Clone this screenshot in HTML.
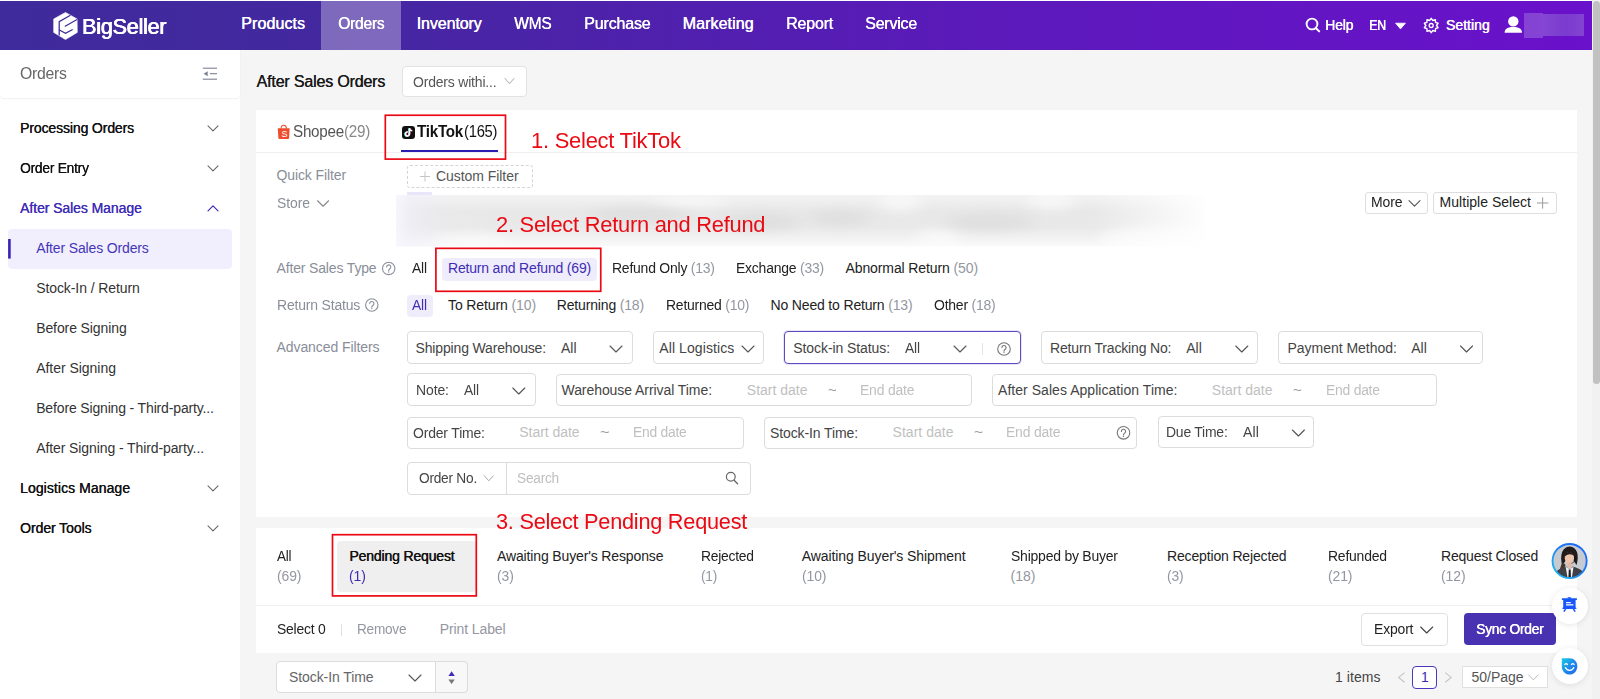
<!DOCTYPE html>
<html lang="en"><head><meta charset="utf-8"><title>After Sales Orders - BigSeller</title>
<style>
html,body{margin:0;padding:0;}
body{width:1600px;height:699px;overflow:hidden;background:#f5f5f5;font-family:"Liberation Sans",sans-serif;}
#app{position:relative;width:1600px;height:699px;overflow:hidden;background:#f5f5f5;}
.b{position:absolute;box-sizing:border-box;}
.t{position:absolute;white-space:nowrap;transform-origin:0 50%;font-family:"Liberation Sans",sans-serif;}
.ov{position:absolute;left:0;top:0;pointer-events:none;}
.g{color:#9497a1;}
.p{color:#3f2db5;}

</style></head>
<body>
<div id="app">

<div class="b" style="left:0px;top:0px;width:1600px;height:1px;background:#fff;"></div>
<div class="b" style="left:0px;top:1px;width:1592px;height:49px;background:linear-gradient(90deg,#3f2b9c 0%,#43289f 20%,#5a1ab9 60%,#6a11cb 100%);"></div>
<div class="b" style="left:321px;top:1px;width:80px;height:49px;background:rgba(255,255,255,0.31);"></div>
<div class="b" style="left:1524px;top:13px;width:19px;height:25px;background:#8543d3;filter:blur(0.6px);"></div>
<div class="b" style="left:1540px;top:14px;width:44px;height:22px;background:linear-gradient(90deg,#8547d3,#7a3bcf 60%,#8344d2);filter:blur(0.6px);"></div>
<div class="b" style="left:1592px;top:0px;width:8px;height:699px;background:#f1f1f1;"></div>
<div class="b" style="left:1593px;top:1px;width:7px;height:383px;background:#c1c1c1;border-radius:3.5px;"></div>
<div class="b" style="left:0px;top:50px;width:240px;height:649px;background:#fff;"></div>
<div class="b" style="left:0px;top:50px;width:240px;height:48px;background:#fff;border-radius:0 0 4px 4px;box-shadow:0 1px 2px rgba(0,0,0,0.07);"></div>
<div class="b" style="left:8px;top:229px;width:224px;height:40px;background:#f1effd;border-radius:4px;"></div>
<div class="b" style="left:402px;top:66px;width:125px;height:31px;background:#fff;border:1px solid #e2e2e2;border-radius:4px;"></div>
<div class="b" style="left:256px;top:110px;width:1321px;height:407px;background:#fff;"></div>
<div class="b" style="left:256px;top:152px;width:1321px;height:1px;background:#efefef;"></div>
<div class="b" style="left:402px;top:125.5px;width:13px;height:13.0px;background:#111;border-radius:3px;"></div>
<div class="b" style="left:401px;top:150px;width:97px;height:2px;background:#2a1db0;"></div>
<div class="b" style="left:407px;top:165px;width:126px;height:23px;border:1px dashed #d4d4d4;border-radius:3px;"></div>
<div class="b" style="left:407px;top:192px;width:25px;height:5px;background:#e9e6fb;"></div>
<div class="b" style="left:1365px;top:192px;width:63px;height:22px;border:1px solid #dedede;border-radius:3px;background:#fff;"></div>
<div class="b" style="left:1433px;top:192px;width:124px;height:22px;border:1px solid #dedede;border-radius:3px;background:#fff;"></div>
<div class="b" style="left:442px;top:257.5px;width:154.5px;height:23.0px;background:#efecfc;border-radius:4px;"></div>
<div class="b" style="left:407px;top:294.5px;width:25.5px;height:22.5px;background:#efecfc;border-radius:4px;"></div>
<div class="b" style="left:407px;top:331px;width:226px;height:33px;border:1px solid #dcdcdc;border-radius:4px;background:#fff;"></div>
<div class="b" style="left:653px;top:331px;width:111px;height:33px;border:1px solid #dcdcdc;border-radius:4px;background:#fff;"></div>
<div class="b" style="left:784px;top:331px;width:237px;height:33px;border:1px solid #5b4cc4;border-radius:4px;background:#fff;box-shadow:0 0 0 1px rgba(91,76,196,0.15);"></div>
<div class="b" style="left:982px;top:343px;width:1px;height:12px;background:#e3e3e3;"></div>
<div class="b" style="left:1041px;top:331px;width:217px;height:33px;border:1px solid #dcdcdc;border-radius:4px;background:#fff;"></div>
<div class="b" style="left:1278px;top:331px;width:205px;height:33px;border:1px solid #dcdcdc;border-radius:4px;background:#fff;"></div>
<div class="b" style="left:407px;top:373px;width:129px;height:33px;border:1px solid #dcdcdc;border-radius:4px;background:#fff;"></div>
<div class="b" style="left:556px;top:374px;width:416px;height:32px;border:1px solid #dcdcdc;border-radius:4px;background:#fff;"></div>
<div class="b" style="left:992px;top:374px;width:445px;height:32px;border:1px solid #dcdcdc;border-radius:4px;background:#fff;"></div>
<div class="b" style="left:407px;top:417px;width:337px;height:32px;border:1px solid #dcdcdc;border-radius:4px;background:#fff;"></div>
<div class="b" style="left:764px;top:417px;width:373px;height:32px;border:1px solid #dcdcdc;border-radius:4px;background:#fff;"></div>
<div class="b" style="left:1158px;top:416px;width:156px;height:32px;border:1px solid #dcdcdc;border-radius:4px;background:#fff;"></div>
<div class="b" style="left:407px;top:462px;width:344px;height:33px;border:1px solid #dcdcdc;border-radius:4px;background:#fff;"></div>
<div class="b" style="left:506px;top:462px;width:1px;height:33px;background:#dcdcdc;"></div>
<div class="b" style="left:256px;top:528px;width:1321px;height:125px;background:#fff;"></div>
<div class="b" style="left:256px;top:605px;width:1321px;height:1px;background:#efefef;"></div>
<div class="b" style="left:337px;top:541px;width:139px;height:51px;background:#efefef;border-radius:4px;"></div>
<div class="b" style="left:341px;top:624px;width:1px;height:12px;background:#e0e0e0;"></div>
<div class="b" style="left:1361px;top:613px;width:86.5px;height:32.5px;border:1px solid #e0e0e0;border-radius:4px;background:#fff;"></div>
<div class="b" style="left:1463.5px;top:613.3px;width:92.5px;height:32.200000000000045px;background:#4932b1;border-radius:4px;"></div>
<div class="b" style="left:276px;top:661px;width:192px;height:32px;border:1px solid #dcdcdc;border-radius:4px;background:#fff;"></div>
<div class="b" style="left:435px;top:661px;width:33px;height:32px;border:1px solid #dcdcdc;border-radius:0 4px 4px 0;background:#f8f8f8;"></div>
<div class="b" style="left:1412px;top:665.7px;width:25px;height:23.59999999999991px;border:1px solid #4a38bd;border-radius:4px;background:#fff;"></div>
<div class="b" style="left:1462px;top:665.7px;width:86px;height:22.799999999999955px;border:1px solid #e0e0e0;background:#fff;"></div>
<div class="b" style="left:1551.5px;top:587.8px;width:36.0px;height:36.0px;background:#fff;border-radius:50%;box-shadow:0 1px 6px rgba(0,0,0,0.10);"></div>
<div class="b" style="left:1551.5px;top:647.8px;width:36.0px;height:36.0px;background:#fff;border-radius:50%;box-shadow:0 1px 6px rgba(0,0,0,0.10);"></div>

<svg class="ov" width="1600" height="699" viewBox="0 0 1600 699">
<path d="M65.5 12.4 L77.1 19.0 L77.3 32.4 L65.5 39.6 L53.7 32.4 L53.7 19.0 Z" fill="#fff" stroke="#fff" stroke-width="0.6" stroke-linejoin="round"/><g fill="none" stroke="#3d2a9a" stroke-width="1.25" stroke-linejoin="miter"><path d="M70.4 15.3 L59.2 21.7 L59.2 35.6"/><path d="M65.2 26.2 L76.6 19.7" stroke-linecap="round"/><path d="M59.4 30.0 L65.5 33.4 L72.2 29.7" stroke-linecap="round"/></g>
<circle cx="1312" cy="24" r="5.4" fill="none" stroke="#fff" stroke-width="1.9"/><path d="M1316 28.2 L1319.2 31.4" stroke="#fff" stroke-width="2" stroke-linecap="round"/>
<path d="M1395.6 23.2 L1405.4 23.2 L1400.5 28.9 Z" fill="#fff" stroke="#fff" stroke-width="0.8" stroke-linejoin="round"/>
<g transform="translate(1431.2,25.5)" fill="none" stroke="#fff"><circle r="2.0" stroke-width="1.3"/><path stroke-width="1.4" stroke-linejoin="round" d="M0.00 -7.20 L1.64 -5.04 L4.23 -5.82 L4.29 -3.12 L6.85 -2.22 L5.30 0.00 L6.85 2.22 L4.29 3.12 L4.23 5.82 L1.64 5.04 L0.00 7.20 L-1.64 5.04 L-4.23 5.82 L-4.29 3.12 L-6.85 2.22 L-5.30 0.00 L-6.85 -2.22 L-4.29 -3.12 L-4.23 -5.82 L-1.64 -5.04 Z"/></g>
<circle cx="1513.3" cy="21.4" r="5.2" fill="#fff"/><path d="M1504.6 32.8 C1504.6 28.6 1508.4 27.0 1513.3 27.0 C1518.2 27.0 1522 28.6 1522 32.8 Z" fill="#fff"/>
<g stroke="#7d8192" stroke-width="1.1" fill="none" stroke-linecap="butt"><path d="M202.8 68.2 H217"/><path d="M210 73.7 H217"/><path d="M202.8 79.2 H217"/></g><path d="M203.6 73.7 L207.7 71.2 L207.7 76.2 Z" fill="#7d8192"/>
<path d="M208.00 125.90 L213.00 130.90 L218.00 125.90" fill="none" stroke="#666" stroke-width="1.1" stroke-linecap="round" stroke-linejoin="round"/>
<path d="M208.00 165.90 L213.00 170.90 L218.00 165.90" fill="none" stroke="#666" stroke-width="1.1" stroke-linecap="round" stroke-linejoin="round"/>
<path d="M208.00 210.90 L213.00 205.90 L218.00 210.90" fill="none" stroke="#3f2db5" stroke-width="1.2" stroke-linecap="round" stroke-linejoin="round"/>
<rect x="8.1" y="239" width="2.6" height="19.6" fill="#3a22b5"/>
<path d="M208.00 485.90 L213.00 490.90 L218.00 485.90" fill="none" stroke="#666" stroke-width="1.1" stroke-linecap="round" stroke-linejoin="round"/>
<path d="M208.00 525.90 L213.00 530.90 L218.00 525.90" fill="none" stroke="#666" stroke-width="1.1" stroke-linecap="round" stroke-linejoin="round"/>
<path d="M505.00 78.50 L509.50 83.50 L514.00 78.50" fill="none" stroke="#bbb" stroke-width="1.1" stroke-linecap="round" stroke-linejoin="round"/>
<g transform="translate(277.5,124.8)"><path d="M3.6 3.6 C3.6 1.4 4.8 0.4 6.25 0.4 C7.7 0.4 8.9 1.4 8.9 3.6" fill="none" stroke="#ee4d2d" stroke-width="1.1"/><path d="M0.3 3.4 H12.2 L11.6 13.2 C11.55 13.8 11.2 14.1 10.6 14.1 H1.9 C1.3 14.1 0.95 13.8 0.9 13.2 Z" fill="#ee4d2d"/></g>
<g transform="translate(402,125.5)"><path d="M7.4 2.6 V8.4 a2 2 0 1 1 -1.6 -1.95" fill="none" stroke="#25f4ee" stroke-width="1.5" transform="translate(-0.5,0.3)"/><path d="M7.4 2.6 V8.4 a2 2 0 1 1 -1.6 -1.95" fill="none" stroke="#fe2c55" stroke-width="1.5" transform="translate(0.5,-0.2)"/><path d="M7.4 2.6 V8.4 a2 2 0 1 1 -1.6 -1.95 M7.4 2.8 C7.7 4.3 8.7 5.1 10.3 5.2" fill="none" stroke="#fff" stroke-width="1.5"/></g>
<rect x="385.3" y="115.25" width="120.2" height="43.85" fill="none" stroke="#ea0a14" stroke-width="1.7"/>
<path d="M420 176.5 H430 M425 171.5 V181.5" stroke="#c4c4c4" stroke-width="1"/>
<path d="M317.60 200.75 L323.10 206.25 L328.60 200.75" fill="none" stroke="#888" stroke-width="1.1" stroke-linecap="round" stroke-linejoin="round"/>
<defs><linearGradient id="blv" x1="0" x2="0" y1="0" y2="1"><stop offset="0" stop-color="#f3f3f3"/><stop offset="0.3" stop-color="#e8e8e8"/><stop offset="0.62" stop-color="#e9e9e9"/><stop offset="0.85" stop-color="#f3f3f3"/><stop offset="1" stop-color="#fbfbfb"/></linearGradient><linearGradient id="blh" x1="0" x2="1" y1="0" y2="0"><stop offset="0" stop-color="#f8f7ff" stop-opacity="0.9"/><stop offset="0.02" stop-color="#f2f0fc" stop-opacity="0.55"/><stop offset="0.06" stop-color="#f0eefa" stop-opacity="0.12"/><stop offset="0.12" stop-color="#fff" stop-opacity="0"/><stop offset="0.86" stop-color="#fff" stop-opacity="0"/><stop offset="0.95" stop-color="#fff" stop-opacity="0.6"/><stop offset="1" stop-color="#fff" stop-opacity="0.95"/></linearGradient><clipPath id="blc"><rect x="396" y="195" width="810" height="51.5"/></clipPath><filter id="blf" x="-20%" y="-50%" width="140%" height="200%"><feGaussianBlur stdDeviation="9 5"/></filter></defs><g clip-path="url(#blc)"><rect x="396" y="195" width="810" height="52" fill="url(#blv)"/><g filter="url(#blf)" fill="#fff" opacity="0.5"><ellipse cx="470" cy="240" rx="40" ry="6"/><ellipse cx="690" cy="202" rx="40" ry="6"/><ellipse cx="900" cy="203" rx="22" ry="10"/><ellipse cx="938" cy="238" rx="22" ry="10"/><ellipse cx="1051" cy="202" rx="24" ry="9"/><ellipse cx="1160" cy="238" rx="60" ry="12"/></g><g filter="url(#blf)" fill="#dcdcdc" opacity="0.7"><ellipse cx="640" cy="215" rx="50" ry="8"/><ellipse cx="760" cy="222" rx="40" ry="9"/><ellipse cx="990" cy="222" rx="45" ry="9"/><ellipse cx="840" cy="218" rx="30" ry="8"/></g><rect x="396" y="195" width="810" height="52" fill="url(#blh)"/></g>
<path d="M1409.00 200.55 L1414.50 206.05 L1420.00 200.55" fill="none" stroke="#555" stroke-width="1.1" stroke-linecap="round" stroke-linejoin="round"/>
<path d="M1537 203 H1548.3 M1542.65 197.4 V208.6" stroke="#999" stroke-width="1"/>
<circle cx="388.7" cy="268.4" r="6.2" fill="none" stroke="#8a8e99" stroke-width="1.1"/>
<path d="M386.60 267.00 a2.1 2.1 0 1 1 3.3 1.7 c-0.8 0.6 -1.2 0.9 -1.2 1.9" fill="none" stroke="#8a8e99" stroke-width="1.1" stroke-linecap="round"/>
<circle cx="388.7" cy="272.00" r="0.7" fill="#8a8e99"/>
<rect x="435.9" y="248.35" width="164.85" height="42.95" fill="none" stroke="#ea0a14" stroke-width="1.7"/>
<circle cx="371.8" cy="305.0" r="6.2" fill="none" stroke="#8a8e99" stroke-width="1.1"/>
<path d="M369.70 303.60 a2.1 2.1 0 1 1 3.3 1.7 c-0.8 0.6 -1.2 0.9 -1.2 1.9" fill="none" stroke="#8a8e99" stroke-width="1.1" stroke-linecap="round"/>
<circle cx="371.8" cy="308.60" r="0.7" fill="#8a8e99"/>
<path d="M610.00 346.00 L616.00 352.00 L622.00 346.00" fill="none" stroke="#555" stroke-width="1.1" stroke-linecap="round" stroke-linejoin="round"/>
<path d="M742.00 346.00 L748.00 352.00 L754.00 346.00" fill="none" stroke="#555" stroke-width="1.1" stroke-linecap="round" stroke-linejoin="round"/>
<path d="M954.00 346.00 L960.00 352.00 L966.00 346.00" fill="none" stroke="#555" stroke-width="1.1" stroke-linecap="round" stroke-linejoin="round"/>
<circle cx="1004" cy="349" r="6.3" fill="none" stroke="#777" stroke-width="1.1"/>
<path d="M1001.90 347.60 a2.1 2.1 0 1 1 3.3 1.7 c-0.8 0.6 -1.2 0.9 -1.2 1.9" fill="none" stroke="#777" stroke-width="1.1" stroke-linecap="round"/>
<circle cx="1004" cy="352.60" r="0.7" fill="#777"/>
<path d="M1235.80 346.00 L1241.80 352.00 L1247.80 346.00" fill="none" stroke="#555" stroke-width="1.1" stroke-linecap="round" stroke-linejoin="round"/>
<path d="M1460.50 346.00 L1466.50 352.00 L1472.50 346.00" fill="none" stroke="#555" stroke-width="1.1" stroke-linecap="round" stroke-linejoin="round"/>
<path d="M512.80 388.00 L518.80 394.00 L524.80 388.00" fill="none" stroke="#555" stroke-width="1.1" stroke-linecap="round" stroke-linejoin="round"/>
<circle cx="1123.5" cy="432.8" r="6.3" fill="none" stroke="#777" stroke-width="1.1"/>
<path d="M1121.40 431.40 a2.1 2.1 0 1 1 3.3 1.7 c-0.8 0.6 -1.2 0.9 -1.2 1.9" fill="none" stroke="#777" stroke-width="1.1" stroke-linecap="round"/>
<circle cx="1123.5" cy="436.40" r="0.7" fill="#777"/>
<path d="M1292.40 430.00 L1298.40 436.00 L1304.40 430.00" fill="none" stroke="#555" stroke-width="1.1" stroke-linecap="round" stroke-linejoin="round"/>
<path d="M484.30 475.80 L488.80 480.80 L493.30 475.80" fill="none" stroke="#aaa" stroke-width="1" stroke-linecap="round" stroke-linejoin="round"/>
<circle cx="730.8" cy="476.7" r="4.4" fill="none" stroke="#666" stroke-width="1.2"/><path d="M734.1 480.2 L737.6 483.7" stroke="#666" stroke-width="1.3" stroke-linecap="round"/>
<rect x="332.5" y="534.7" width="143.8" height="61.2" fill="none" stroke="#ea0a14" stroke-width="1.7"/>
<path d="M1420.70 627.00 L1426.70 633.00 L1432.70 627.00" fill="none" stroke="#444" stroke-width="1.1" stroke-linecap="round" stroke-linejoin="round"/>
<path d="M409.00 675.00 L415.00 681.00 L421.00 675.00" fill="none" stroke="#555" stroke-width="1.1" stroke-linecap="round" stroke-linejoin="round"/>
<path d="M448.4 675.9 L454.8 675.9 L451.6 671.2 Z" fill="#3f2db5"/><path d="M448.4 679.4 L454.8 679.4 L451.6 684 Z" fill="#777"/>
<path d="M1404.6 672.6 L1398.6 677.4 L1404.6 682.2" fill="none" stroke="#c4c4c4" stroke-width="1.1"/>
<path d="M1445.2 672.6 L1451.2 677.4 L1445.2 682.2" fill="none" stroke="#c4c4c4" stroke-width="1.1"/>
<path d="M1528.65 674.90 L1533.40 679.90 L1538.15 674.90" fill="none" stroke="#bbb" stroke-width="1" stroke-linecap="round" stroke-linejoin="round"/>
<defs><linearGradient id="avb" x1="1" y1="0" x2="0" y2="1"><stop offset="0" stop-color="#1c5ef5"/><stop offset="0.5" stop-color="#1f80f2"/><stop offset="1" stop-color="#22c8f0"/></linearGradient><clipPath id="av"><circle cx="1569.6" cy="561" r="16.1"/></clipPath><filter id="avf" x="-10%" y="-10%" width="120%" height="120%"><feGaussianBlur stdDeviation="0.6"/></filter></defs><circle cx="1569.6" cy="561" r="18" fill="url(#avb)"/><g clip-path="url(#av)"><g filter="url(#avf)"><rect x="1552" y="543" width="36" height="36" fill="#c6cbd2"/><path d="M1562.2 566 C1559.6 555 1562 546.8 1569.6 546.4 C1577.4 546.8 1579.4 555 1576.6 565 L1573 560 L1566 560 Z" fill="#231d1c"/><path d="M1562.6 562 C1560.6 566 1559.6 570 1558.6 574 L1562.6 572 L1565.6 565 Z" fill="#4a3228"/><ellipse cx="1569.4" cy="557.8" rx="4.7" ry="5.9" fill="#eec3ad"/><path d="M1564.4 557 C1564.2 551 1573.6 550 1574.6 556.4 C1572.2 553.6 1567.4 553 1564.4 557 Z" fill="#231d1c"/><path d="M1567.4 562.6 H1571.6 V567.4 H1567.4 Z" fill="#e6b7a0"/><path d="M1553 580 C1553.6 571.4 1559 568.4 1566.4 566.4 L1569.6 570 L1572.6 566.4 C1580 568.4 1585.6 571.4 1586.2 580 Z" fill="#3f3f46"/><path d="M1565.6 566.6 L1567.6 578 L1571.8 578 L1573.6 566.6 L1569.6 569.4 Z" fill="#f2f2f2"/><path d="M1568.8 569.6 H1570.6 L1571 578.6 H1568.4 Z" fill="#1b1b20"/><path d="M1574.9 557 v3.6" stroke="#111" stroke-width="1.5" stroke-linecap="round"/><path d="M1574.8 560.4 q-1 2.6 -3.4 2.9" stroke="#222" stroke-width="0.7" fill="none"/></g></g>
<g fill="#1758fb"><rect x="1561.8" y="598.3" width="15.2" height="1.7" rx="0.4"/><rect x="1567.6" y="597.2" width="3.6" height="1.6" rx="0.4"/><rect x="1563.2" y="599.6" width="12.4" height="8.3" rx="0.5"/><rect x="1562.4" y="607.6" width="14" height="1.5" rx="0.4"/><path d="M1566.6 608.6 L1564.6 611.9 L1563.2 611.3 L1565 608.6 Z"/><path d="M1572.4 608.6 L1574.4 611.9 L1575.8 611.3 L1574 608.6 Z"/></g><path d="M1566 602.6 H1570.8 M1566 604.9 H1573.4" stroke="#fff" stroke-width="1.2"/>
<defs><linearGradient id="smg" x1="0" y1="0" x2="1" y2="1"><stop offset="0" stop-color="#1ccbe6"/><stop offset="0.55" stop-color="#1f86ec"/><stop offset="1" stop-color="#1f6ae8"/></linearGradient></defs><path d="M1561.8 658.2 H1569.6 C1574 658.2 1577.3 661.6 1577.3 666.2 C1577.3 671 1573.9 674.6 1569.5 674.6 C1565.2 674.6 1561.8 671 1561.8 666.4 Z" fill="url(#smg)"/><path d="M1564.8 664.6 q1.4 -2 2.8 0 M1571.4 664.6 q1.4 -2 2.8 0" stroke="#fff" stroke-width="1.2" fill="none" stroke-linecap="round"/><path d="M1565.4 667.6 C1566.8 671.2 1572.4 671.2 1573.8 667.6" stroke="#fff" stroke-width="1.3" fill="none" stroke-linecap="round"/>
</svg>

<span class="t" style="left:82px;top:11px;font-size:22.5px;line-height:31px;color:#fff;letter-spacing:-0.250px;transform:scaleX(0.9597);text-shadow:0.5px 0 0 #fff,-0.3px 0 0 #fff;">BigSeller</span>
<span class="t" style="left:241px;top:13px;font-size:16px;line-height:22px;color:#fff;letter-spacing:0.107px;text-shadow:0.45px 0 0 #fff;">Products</span>
<span class="t" style="left:337.5px;top:13px;font-size:16px;line-height:22px;color:#fff;letter-spacing:-0.250px;transform:scaleX(0.9757);text-shadow:0.45px 0 0 #fff;">Orders</span>
<span class="t" style="left:416.5px;top:13px;font-size:16px;line-height:22px;color:#fff;letter-spacing:-0.090px;text-shadow:0.45px 0 0 #fff;">Inventory</span>
<span class="t" style="left:514px;top:13px;font-size:16px;line-height:22px;color:#fff;letter-spacing:-0.250px;transform:scaleX(0.9713);text-shadow:0.45px 0 0 #fff;">WMS</span>
<span class="t" style="left:583.5px;top:13px;font-size:16px;line-height:22px;color:#fff;letter-spacing:-0.137px;transform:scaleX(0.9979);text-shadow:0.45px 0 0 #fff;">Purchase</span>
<span class="t" style="left:682.5px;top:13px;font-size:16px;line-height:22px;color:#fff;letter-spacing:0.083px;text-shadow:0.45px 0 0 #fff;">Marketing</span>
<span class="t" style="left:786px;top:13px;font-size:16px;line-height:22px;color:#fff;letter-spacing:-0.172px;transform:scaleX(0.9964);text-shadow:0.45px 0 0 #fff;">Report</span>
<span class="t" style="left:865px;top:13px;font-size:16px;line-height:22px;color:#fff;letter-spacing:-0.194px;transform:scaleX(0.9963);text-shadow:0.45px 0 0 #fff;">Service</span>
<span class="t" style="left:1324.5px;top:15px;font-size:14px;line-height:20px;color:#fff;letter-spacing:-0.124px;transform:scaleX(0.9956);text-shadow:0.45px 0 0 #fff;">Help</span>
<span class="t" style="left:1369px;top:15px;font-size:14px;line-height:20px;color:#fff;letter-spacing:-0.250px;transform:scaleX(0.8853);text-shadow:0.45px 0 0 #fff;">EN</span>
<span class="t" style="left:1445.8px;top:15px;font-size:14px;line-height:20px;color:#fff;letter-spacing:0.015px;text-shadow:0.45px 0 0 #fff;">Setting</span>
<span class="t" style="left:20px;top:63px;font-size:16px;line-height:22px;color:#666;letter-spacing:-0.250px;transform:scaleX(0.9862);">Orders</span>
<span class="t" style="left:20px;top:118px;font-size:14px;line-height:20px;color:#111;letter-spacing:-0.120px;text-shadow:0.3px 0 0 #111;">Processing Orders</span>
<span class="t" style="left:20px;top:158px;font-size:14px;line-height:20px;color:#111;letter-spacing:-0.250px;transform:scaleX(0.9848);text-shadow:0.3px 0 0 #111;">Order Entry</span>
<span class="t" style="left:20px;top:198px;font-size:14px;line-height:20px;color:#3f2db5;letter-spacing:-0.076px;text-shadow:0.3px 0 0 #3f2db5;">After Sales Manage</span>
<span class="t" style="left:36.2px;top:238px;font-size:14px;line-height:20px;color:#4535b8;letter-spacing:-0.148px;">After Sales Orders</span>
<span class="t" style="left:36.2px;top:278px;font-size:14px;line-height:20px;color:#333;letter-spacing:-0.085px;">Stock-In / Return</span>
<span class="t" style="left:36.2px;top:318px;font-size:14px;line-height:20px;color:#333;letter-spacing:-0.103px;">Before Signing</span>
<span class="t" style="left:36.2px;top:358px;font-size:14px;line-height:20px;color:#333;letter-spacing:-0.029px;">After Signing</span>
<span class="t" style="left:36.2px;top:398px;font-size:14px;line-height:20px;color:#333;letter-spacing:-0.153px;">Before Signing - Third-party...</span>
<span class="t" style="left:36.2px;top:438px;font-size:14px;line-height:20px;color:#333;letter-spacing:-0.096px;">After Signing - Third-party...</span>
<span class="t" style="left:20px;top:478px;font-size:14px;line-height:20px;color:#111;letter-spacing:0.065px;text-shadow:0.3px 0 0 #111;">Logistics Manage</span>
<span class="t" style="left:20px;top:518px;font-size:14px;line-height:20px;color:#111;letter-spacing:-0.064px;text-shadow:0.3px 0 0 #111;">Order Tools</span>
<span class="t" style="left:256.5px;top:71px;font-size:16px;line-height:22px;color:#1a1a1a;letter-spacing:-0.173px;text-shadow:0.35px 0 0 #1a1a1a;">After Sales Orders</span>
<span class="t" style="left:413.4px;top:72px;font-size:14px;line-height:20px;color:#555;letter-spacing:-0.184px;transform:scaleX(0.9978);">Orders withi...</span>
<span class="t" style="left:281.4px;top:128px;font-size:9px;line-height:13px;color:#fff;">S</span>
<span class="t" style="left:292.5px;top:121px;font-size:16px;line-height:22px;color:#555;letter-spacing:-0.250px;transform:scaleX(0.9499);">Shopee<span style="color:#888">(29)</span></span>
<span class="t" style="left:417px;top:121px;font-size:16px;line-height:22px;color:#111;font-weight:700;letter-spacing:-0.250px;transform:scaleX(0.9479);">TikTok</span>
<span class="t" style="left:464px;top:121px;font-size:16px;line-height:22px;color:#111;letter-spacing:-0.250px;transform:scaleX(0.9214);">(165)</span>
<span class="t" style="left:530.5px;top:125px;font-size:22px;line-height:31px;color:#ea0a14;letter-spacing:-0.250px;transform:scaleX(0.9978);">1. Select TikTok</span>
<span class="t" style="left:276.5px;top:165px;font-size:14px;line-height:20px;color:#8a8e99;letter-spacing:-0.108px;">Quick Filter</span>
<span class="t" style="left:436px;top:166px;font-size:14px;line-height:20px;color:#555;letter-spacing:-0.056px;">Custom Filter</span>
<span class="t" style="left:277px;top:193px;font-size:14px;line-height:20px;color:#8a8e99;letter-spacing:-0.094px;transform:scaleX(0.9972);">Store</span>
<span class="t" style="left:496px;top:209px;font-size:22px;line-height:31px;color:#ea0a14;letter-spacing:-0.250px;transform:scaleX(0.9940);">2. Select Return and Refund</span>
<span class="t" style="left:1371.4px;top:192px;font-size:14px;line-height:20px;color:#222;letter-spacing:-0.077px;transform:scaleX(0.9976);">More</span>
<span class="t" style="left:1439.6px;top:192px;font-size:14px;line-height:20px;color:#222;letter-spacing:0.024px;">Multiple Select</span>
<span class="t" style="left:276.5px;top:258px;font-size:14px;line-height:20px;color:#8a8e99;letter-spacing:-0.154px;">After Sales Type</span>
<span class="t" style="left:412px;top:258px;font-size:14px;line-height:20px;color:#222;letter-spacing:-0.188px;transform:scaleX(0.9877);">All</span>
<span class="t" style="left:448px;top:258px;font-size:14px;line-height:20px;color:#3f2db5;letter-spacing:-0.186px;">Return and Refund (69)</span>
<span class="t" style="left:612px;top:258px;font-size:14px;line-height:20px;color:#222;letter-spacing:-0.227px;transform:scaleX(0.9978);">Refund Only <span class="g">(13)</span></span>
<span class="t" style="left:735.8px;top:258px;font-size:14px;line-height:20px;color:#222;letter-spacing:-0.221px;transform:scaleX(0.9975);">Exchange <span class="g">(33)</span></span>
<span class="t" style="left:845.5px;top:258px;font-size:14px;line-height:20px;color:#222;letter-spacing:-0.106px;">Abnormal Return <span class="g">(50)</span></span>
<span class="t" style="left:276.5px;top:295px;font-size:14px;line-height:20px;color:#8a8e99;letter-spacing:-0.178px;transform:scaleX(0.9979);">Return Status</span>
<span class="t" style="left:412px;top:295px;font-size:14px;line-height:20px;color:#3f2db5;letter-spacing:-0.188px;transform:scaleX(0.9877);">All</span>
<span class="t" style="left:448px;top:295px;font-size:14px;line-height:20px;color:#222;letter-spacing:-0.107px;">To Return <span class="g">(10)</span></span>
<span class="t" style="left:556.8px;top:295px;font-size:14px;line-height:20px;color:#222;letter-spacing:-0.164px;">Returning <span class="g">(18)</span></span>
<span class="t" style="left:665.5px;top:295px;font-size:14px;line-height:20px;color:#222;letter-spacing:-0.222px;transform:scaleX(0.9973);">Returned <span class="g">(10)</span></span>
<span class="t" style="left:770.5px;top:295px;font-size:14px;line-height:20px;color:#222;letter-spacing:-0.161px;">No Need to Return <span class="g">(13)</span></span>
<span class="t" style="left:933.8px;top:295px;font-size:14px;line-height:20px;color:#222;letter-spacing:-0.211px;transform:scaleX(0.9966);">Other <span class="g">(18)</span></span>
<span class="t" style="left:276.5px;top:337px;font-size:14px;line-height:20px;color:#8a8e99;letter-spacing:-0.080px;">Advanced Filters</span>
<span class="t" style="left:415.5px;top:338px;font-size:14px;line-height:20px;color:#444;letter-spacing:-0.150px;">Shipping Warehouse:</span>
<span class="t" style="left:561px;top:338px;font-size:14px;line-height:20px;color:#444;letter-spacing:-0.021px;">All</span>
<span class="t" style="left:659.3px;top:338px;font-size:14px;line-height:20px;color:#444;letter-spacing:0.083px;">All Logistics</span>
<span class="t" style="left:793.3px;top:338px;font-size:14px;line-height:20px;color:#444;letter-spacing:-0.084px;">Stock-in Status:</span>
<span class="t" style="left:905px;top:338px;font-size:14px;line-height:20px;color:#444;letter-spacing:-0.188px;transform:scaleX(0.9877);">All</span>
<span class="t" style="left:1050px;top:338px;font-size:14px;line-height:20px;color:#444;letter-spacing:-0.168px;">Return Tracking No:</span>
<span class="t" style="left:1186.3px;top:338px;font-size:14px;line-height:20px;color:#444;letter-spacing:-0.021px;">All</span>
<span class="t" style="left:1287.5px;top:338px;font-size:14px;line-height:20px;color:#444;letter-spacing:-0.029px;">Payment Method:</span>
<span class="t" style="left:1411.3px;top:338px;font-size:14px;line-height:20px;color:#444;letter-spacing:-0.021px;">All</span>
<span class="t" style="left:415.5px;top:380px;font-size:14px;line-height:20px;color:#444;letter-spacing:-0.094px;transform:scaleX(0.9972);">Note:</span>
<span class="t" style="left:463.5px;top:380px;font-size:14px;line-height:20px;color:#444;letter-spacing:-0.188px;transform:scaleX(0.9877);">All</span>
<span class="t" style="left:561.5px;top:380px;font-size:14px;line-height:20px;color:#444;letter-spacing:-0.065px;">Warehouse Arrival Time:</span>
<span class="t" style="left:746.8px;top:380px;font-size:14px;line-height:20px;color:#bfbfbf;">Start date</span>
<span class="t" style="left:828.3px;top:380px;font-size:14px;line-height:20px;color:#999;transform:scaleX(1.0626);">~</span>
<span class="t" style="left:860px;top:380px;font-size:14px;line-height:20px;color:#bfbfbf;letter-spacing:-0.195px;transform:scaleX(0.9964);">End date</span>
<span class="t" style="left:998px;top:380px;font-size:14px;line-height:20px;color:#444;letter-spacing:0.045px;">After Sales Application Time:</span>
<span class="t" style="left:1211.8px;top:380px;font-size:14px;line-height:20px;color:#bfbfbf;">Start date</span>
<span class="t" style="left:1293px;top:380px;font-size:14px;line-height:20px;color:#999;transform:scaleX(1.0748);">~</span>
<span class="t" style="left:1325.5px;top:380px;font-size:14px;line-height:20px;color:#bfbfbf;letter-spacing:-0.250px;transform:scaleX(0.9942);">End date</span>
<span class="t" style="left:413px;top:423px;font-size:14px;line-height:20px;color:#444;letter-spacing:-0.173px;transform:scaleX(0.9976);">Order Time:</span>
<span class="t" style="left:519.3px;top:422px;font-size:14px;line-height:20px;color:#bfbfbf;letter-spacing:-0.050px;">Start date</span>
<span class="t" style="left:600px;top:422px;font-size:14px;line-height:20px;color:#999;transform:scaleX(1.1603);">~</span>
<span class="t" style="left:633px;top:422px;font-size:14px;line-height:20px;color:#bfbfbf;letter-spacing:-0.250px;transform:scaleX(0.9906);">End date</span>
<span class="t" style="left:770px;top:423px;font-size:14px;line-height:20px;color:#444;letter-spacing:-0.105px;">Stock-In Time:</span>
<span class="t" style="left:892.5px;top:422px;font-size:14px;line-height:20px;color:#bfbfbf;letter-spacing:0.040px;">Start date</span>
<span class="t" style="left:973.8px;top:422px;font-size:14px;line-height:20px;color:#999;transform:scaleX(1.1237);">~</span>
<span class="t" style="left:1006px;top:422px;font-size:14px;line-height:20px;color:#bfbfbf;letter-spacing:-0.195px;transform:scaleX(0.9964);">End date</span>
<span class="t" style="left:1166.2px;top:422px;font-size:14px;line-height:20px;color:#444;letter-spacing:-0.224px;transform:scaleX(0.9964);">Due Time:</span>
<span class="t" style="left:1243px;top:422px;font-size:14px;line-height:20px;color:#444;letter-spacing:0.079px;transform:scaleX(1.0050);">All</span>
<span class="t" style="left:418.8px;top:468px;font-size:14px;line-height:20px;color:#444;letter-spacing:-0.250px;transform:scaleX(0.9787);">Order No.</span>
<span class="t" style="left:516.8px;top:468px;font-size:14px;line-height:20px;color:#bfbfbf;letter-spacing:-0.250px;transform:scaleX(0.9789);">Search</span>
<span class="t" style="left:495.5px;top:506px;font-size:22px;line-height:31px;color:#ea0a14;letter-spacing:-0.250px;transform:scaleX(0.9874);">3. Select Pending Request</span>
<span class="t" style="left:276.8px;top:546px;font-size:14px;line-height:20px;color:#222;letter-spacing:-0.250px;transform:scaleX(0.9627);">All</span>
<span class="t" style="left:276.8px;top:566px;font-size:14px;line-height:20px;color:#9497a1;letter-spacing:-0.102px;transform:scaleX(0.9959);">(69)</span>
<span class="t" style="left:349.3px;top:546px;font-size:14px;line-height:20px;color:#111;letter-spacing:-0.161px;text-shadow:0.4px 0 0 #111;">Pending Request</span>
<span class="t" style="left:349.3px;top:566px;font-size:14px;line-height:20px;color:#3f2db5;letter-spacing:-0.042px;transform:scaleX(0.9976);">(1)</span>
<span class="t" style="left:497px;top:546px;font-size:14px;line-height:20px;color:#222;letter-spacing:-0.137px;">Awaiting Buyer's Response</span>
<span class="t" style="left:497px;top:566px;font-size:14px;line-height:20px;color:#9497a1;letter-spacing:-0.108px;transform:scaleX(0.9936);">(3)</span>
<span class="t" style="left:701.3px;top:546px;font-size:14px;line-height:20px;color:#222;letter-spacing:-0.250px;transform:scaleX(0.9904);">Rejected</span>
<span class="t" style="left:701.3px;top:566px;font-size:14px;line-height:20px;color:#9497a1;letter-spacing:-0.250px;transform:scaleX(0.9744);">(1)</span>
<span class="t" style="left:801.8px;top:546px;font-size:14px;line-height:20px;color:#222;letter-spacing:-0.086px;">Awaiting Buyer's Shipment</span>
<span class="t" style="left:801.8px;top:566px;font-size:14px;line-height:20px;color:#9497a1;letter-spacing:-0.102px;transform:scaleX(0.9959);">(10)</span>
<span class="t" style="left:1010.5px;top:546px;font-size:14px;line-height:20px;color:#222;letter-spacing:-0.221px;transform:scaleX(0.9979);">Shipped by Buyer</span>
<span class="t" style="left:1010.5px;top:566px;font-size:14px;line-height:20px;color:#9497a1;letter-spacing:0.023px;">(18)</span>
<span class="t" style="left:1167px;top:546px;font-size:14px;line-height:20px;color:#222;letter-spacing:-0.155px;">Reception Rejected</span>
<span class="t" style="left:1167px;top:566px;font-size:14px;line-height:20px;color:#9497a1;letter-spacing:-0.208px;transform:scaleX(0.9875);">(3)</span>
<span class="t" style="left:1328px;top:546px;font-size:14px;line-height:20px;color:#222;letter-spacing:-0.215px;transform:scaleX(0.9964);">Refunded</span>
<span class="t" style="left:1328px;top:566px;font-size:14px;line-height:20px;color:#9497a1;letter-spacing:-0.102px;transform:scaleX(0.9959);">(21)</span>
<span class="t" style="left:1441px;top:546px;font-size:14px;line-height:20px;color:#222;letter-spacing:-0.188px;">Request Closed</span>
<span class="t" style="left:1441px;top:566px;font-size:14px;line-height:20px;color:#9497a1;letter-spacing:-0.077px;transform:scaleX(0.9969);">(12)</span>
<span class="t" style="left:276.5px;top:619px;font-size:14px;line-height:20px;color:#222;letter-spacing:-0.224px;transform:scaleX(0.9954);">Select 0</span>
<span class="t" style="left:357.3px;top:619px;font-size:14px;line-height:20px;color:#9497a1;letter-spacing:-0.250px;transform:scaleX(0.9727);">Remove</span>
<span class="t" style="left:439.8px;top:619px;font-size:14px;line-height:20px;color:#9497a1;letter-spacing:-0.113px;">Print Label</span>
<span class="t" style="left:1374px;top:619px;font-size:14px;line-height:20px;color:#222;letter-spacing:-0.161px;transform:scaleX(0.9959);">Export</span>
<span class="t" style="left:1476.2px;top:619px;font-size:14px;line-height:20px;color:#fff;letter-spacing:-0.250px;transform:scaleX(0.9845);text-shadow:0.5px 0 0 #fff;">Sync Order</span>
<span class="t" style="left:289px;top:667px;font-size:14px;line-height:20px;color:#666;letter-spacing:-0.084px;">Stock-In Time</span>
<span class="t" style="left:1335px;top:667px;font-size:14px;line-height:20px;color:#444;letter-spacing:0.068px;">1 items</span>
<span class="t" style="left:1421px;top:667px;font-size:14px;line-height:20px;color:#3f2db5;">1</span>
<span class="t" style="left:1471.5px;top:667px;font-size:14px;line-height:20px;color:#555;letter-spacing:-0.025px;">50/Page</span>

</div>
</body></html>
